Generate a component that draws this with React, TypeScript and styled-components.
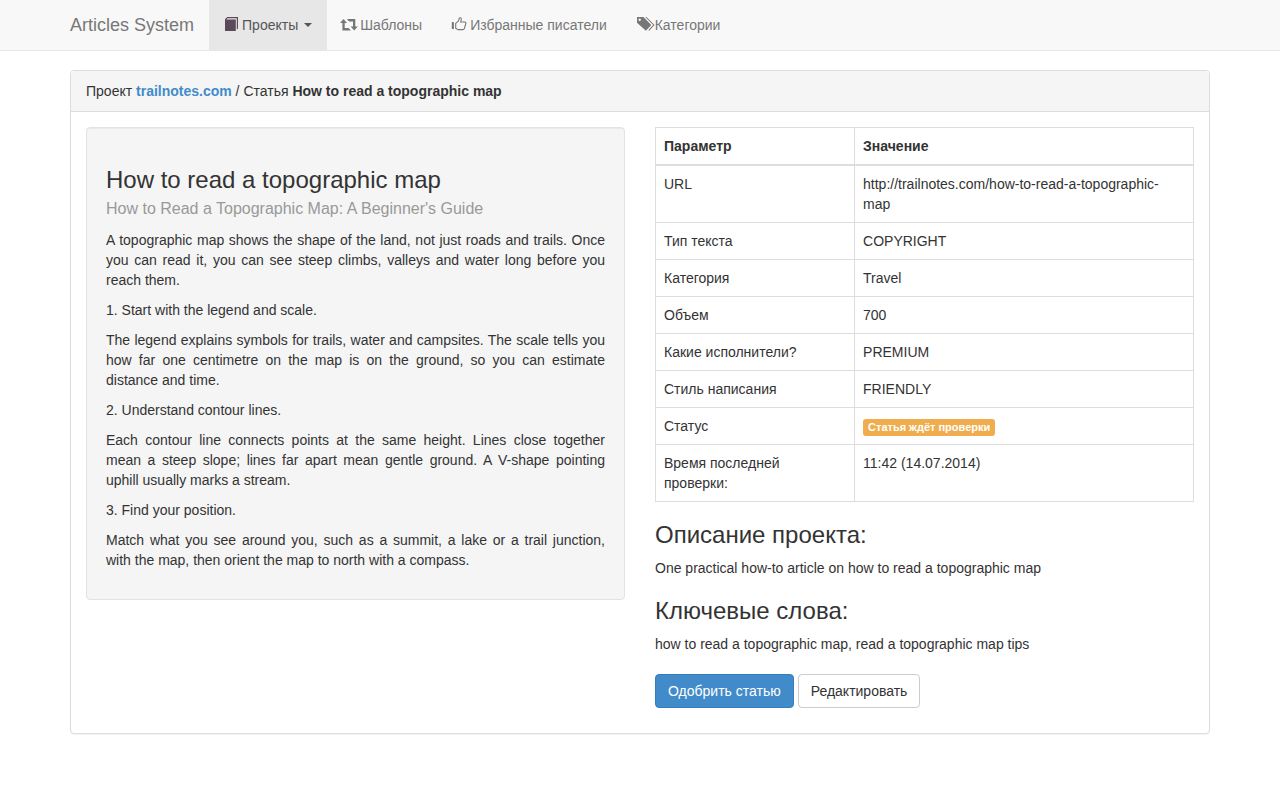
import React from "react";
import styled, { createGlobalStyle, css } from "styled-components";

const GlobalStyle = createGlobalStyle`
  *, *::before, *::after { box-sizing: border-box; }
  body {
    margin: 0;
    background: #fff;
    color: #333;
    font-family: "Helvetica Neue", Helvetica, "Liberation Sans", Arial, sans-serif;
    font-size: 14px;
    line-height: 20px;
  }
`;

const Navbar = styled.header`
  background: #f8f8f8;
  border-bottom: 1px solid #e7e7e7;
`;

const Container = styled.div`
  max-width: 1140px;
  margin: 0 auto;
`;

const NavInner = styled(Container)`
  display: flex;
  flex-wrap: wrap;
`;

const Brand = styled.a`
  padding: 15px 15px 15px 0;
  color: #777;
  font-size: 18px;
  text-decoration: none;
`;

const NavList = styled.ul`
  display: flex;
  flex-wrap: wrap;
  margin: 0;
  padding: 0;
  list-style: none;
`;

const NavLink = styled.a<{ $active?: boolean }>`
  display: flex;
  align-items: center;
  gap: 4px;
  padding: 15px;
  color: ${(p) => (p.$active ? "#555" : "#777")};
  background: ${(p) => (p.$active ? "#e7e7e7" : "transparent")};
  text-decoration: none;
  white-space: nowrap;
`;

const IconBox = styled.span`
  display: flex;
  width: 14px;
  height: 14px;
  margin-bottom: 2px;

  svg {
    flex: none;
    overflow: visible;
    fill: currentColor;
  }
`;

const Caret = styled.span`
  margin-left: 2px;
  border: 4px solid transparent;
  border-top-color: currentColor;
  border-bottom: 0;
`;

const Main = styled(Container).attrs({ as: "main" })`
  padding: 19px 0 20px;
`;

const Panel = styled.section`
  border: 1px solid #ddd;
  border-radius: 4px;
  background: #fff;
  box-shadow: 0 1px 1px rgba(0, 0, 0, 0.05);
`;

const PanelHeading = styled.div`
  padding: 10px 15px;
  background: #f5f5f5;
  border-bottom: 1px solid #ddd;
  border-radius: 3px 3px 0 0;
`;

const ProjectLink = styled.a`
  color: #428bca;
  font-weight: bold;
  text-decoration: none;
`;

const PanelBody = styled.div`
  display: grid;
  grid-template-columns: minmax(0, 1fr) minmax(0, 1fr);
  align-items: start;
  gap: 30px;
  padding: 15px 15px 25px;
`;

const Well = styled.article`
  padding: 39px 19px 19px;
  background: #f5f5f5;
  border: 1px solid #e3e3e3;
  border-radius: 4px;
  box-shadow: inset 0 1px 1px rgba(0, 0, 0, 0.05);
`;

const heading = css`
  margin: 0;
  font-size: 24px;
  font-weight: 500;
  line-height: 26px;
`;

const Title = styled.h1`
  ${heading}
`;

const Subtitle = styled.p`
  margin: 0 0 10px;
  padding-top: 5px;
  color: #999;
  font-size: 16px;
  line-height: 22px;
`;

const Paragraph = styled.p`
  margin: 0 0 10px;
  text-align: justify;
`;

const Table = styled.table`
  width: 100%;
  margin-bottom: 20px;
  border-collapse: collapse;
  table-layout: fixed;
`;

const HeadCell = styled.th`
  padding: 8px;
  border: 1px solid #ddd;
  border-bottom-width: 2px;
  text-align: left;

  &:first-child {
    width: 37%;
  }
`;

const Cell = styled.td`
  padding: 8px;
  border: 1px solid #ddd;
  vertical-align: top;
`;

const StatusLabel = styled.span`
  padding: 2px 5px 3px;
  border-radius: 3px;
  background: #f0ad4e;
  color: #fff;
  font-size: 11px;
  font-weight: bold;
  line-height: 11px;
`;

const Info = styled.section`
  margin-bottom: 20px;
`;

const InfoTitle = styled.h2`
  ${heading}
  margin-bottom: 10px;
`;

const InfoText = styled.p`
  margin: 0;
`;

const Actions = styled.div`
  display: flex;
  flex-wrap: wrap;
  gap: 4px;
`;

const Button = styled.button<{ $primary?: boolean }>`
  padding: 6px 12px;
  border: 1px solid ${(p) => (p.$primary ? "#357ebd" : "#ccc")};
  border-radius: 4px;
  background: ${(p) => (p.$primary ? "#428bca" : "#fff")};
  color: ${(p) => (p.$primary ? "#fff" : "#333")};
  font: inherit;
  cursor: pointer;
`;

const BookIcon = () => (
  <svg width="14" height="14" viewBox="0 0 14 14" aria-hidden="true" color="#5b4b58">
    <path d="M3.2 0H14V11.4L12.8 12.6V1.2H3.6L2.4 2.4H11.8V14H1V2.2Z" />
  </svg>
);

const RetweetIcon = () => (
  <svg width="14" height="14" viewBox="0 0 14 14" aria-hidden="true">
    <path d="M1.5 1.9 5 5.9H2.7V11.1H6.6L8.9 13.5H.4V5.9H-2Z" />
    <path d="M4.9 2H13.3V9.6H15.8L12.2 13.6 8.6 9.6H11V4.4H7.1Z" />
  </svg>
);

const ThumbIcon = () => (
  <svg width="14" height="14" viewBox="0 0 14 14" aria-hidden="true">
    <path d="M-.2 5.1H1.9V12H-.2Z" />
    <path
      d="M3.7 6.4 6.4 4.1 7.4.9Q9.4.2 9.3 2.2L8.7 5H12.6Q14.2 5.1 13.8 6.5L12.4 11.3Q12 12.6 10.7 12.6H5.8L3.7 11.3Z"
      style={{ fill: "none" }}
      stroke="currentColor"
      strokeWidth="1.1"
      strokeLinejoin="round"
    />
  </svg>
);

const TagsIcon = () => (
  <svg width="14" height="14" viewBox="0 0 14 14" aria-hidden="true">
    <path
      fillRule="evenodd"
      d="M0 0H6.4L14.3 8 8.9 13.8 0 5.8ZM2.7 1.5A1.2 1.2 0 1 0 2.7 3.9 1.2 1.2 0 1 0 2.7 1.5Z"
    />
    <path d="M8.2 0H9.4L17.6 8.1 12.2 13.8 11.4 13.1 16.2 8.1Z" />
  </svg>
);

const navItems = [
  { text: "Проекты", icon: <BookIcon />, active: true },
  { text: "Шаблоны", icon: <RetweetIcon /> },
  { text: "Избранные писатели", icon: <ThumbIcon /> },
  { text: "Категории", icon: <TagsIcon /> },
];

const paragraphs = [
  "A topographic map shows the shape of the land, not just roads and trails. Once you can read it, you can see steep climbs, valleys and water long before you reach them.",
  "1. Start with the legend and scale.",
  "The legend explains symbols for trails, water and campsites. The scale tells you how far one centimetre on the map is on the ground, so you can estimate distance and time.",
  "2. Understand contour lines.",
  "Each contour line connects points at the same height. Lines close together mean a steep slope; lines far apart mean gentle ground. A V-shape pointing uphill usually marks a stream.",
  "3. Find your position.",
  "Match what you see around you, such as a summit, a lake or a trail junction, with the map, then orient the map to north with a compass.",
];

const params: [string, React.ReactNode][] = [
  ["URL", "http://trailnotes.com/how-to-read-a-topographic-map"],
  ["Тип текста", "COPYRIGHT"],
  ["Категория", "Travel"],
  ["Объем", "700"],
  ["Какие исполнители?", "PREMIUM"],
  ["Стиль написания", "FRIENDLY"],
  ["Статус", <StatusLabel>Статья ждёт проверки</StatusLabel>],
  ["Время последней проверки:", "11:42 (14.07.2014)"],
];

export default function App() {
  return (
    <>
      <GlobalStyle />
      <Navbar>
        <NavInner>
          <Brand href="#">Articles System</Brand>
          <nav>
            <NavList>
              {navItems.map((item) => (
                <li key={item.text}>
                  <NavLink href="#" $active={item.active}>
                    <IconBox>{item.icon}</IconBox>
                    {item.text}
                    {item.active && <Caret />}
                  </NavLink>
                </li>
              ))}
            </NavList>
          </nav>
        </NavInner>
      </Navbar>
      <Main>
        <Panel>
          <PanelHeading>
            Проект <ProjectLink href="#">trailnotes.com</ProjectLink> / Статья{" "}
            <strong>How to read a topographic map</strong>
          </PanelHeading>
          <PanelBody>
            <Well>
              <Title>How to read a topographic map</Title>
              <Subtitle>How to Read a Topographic Map: A Beginner's Guide</Subtitle>
              {paragraphs.map((text) => (
                <Paragraph key={text}>{text}</Paragraph>
              ))}
            </Well>
            <div>
              <Table>
                <thead>
                  <tr>
                    <HeadCell scope="col">Параметр</HeadCell>
                    <HeadCell scope="col">Значение</HeadCell>
                  </tr>
                </thead>
                <tbody>
                  {params.map(([name, value]) => (
                    <tr key={name}>
                      <Cell>{name}</Cell>
                      <Cell>{value}</Cell>
                    </tr>
                  ))}
                </tbody>
              </Table>
              <Info>
                <InfoTitle>Описание проекта:</InfoTitle>
                <InfoText>One practical how-to article on how to read a topographic map</InfoText>
              </Info>
              <Info>
                <InfoTitle>Ключевые слова:</InfoTitle>
                <InfoText>how to read a topographic map, read a topographic map tips</InfoText>
              </Info>
              <Actions>
                <Button type="button" $primary>
                  Одобрить статью
                </Button>
                <Button type="button">Редактировать</Button>
              </Actions>
            </div>
          </PanelBody>
        </Panel>
      </Main>
    </>
  );
}
